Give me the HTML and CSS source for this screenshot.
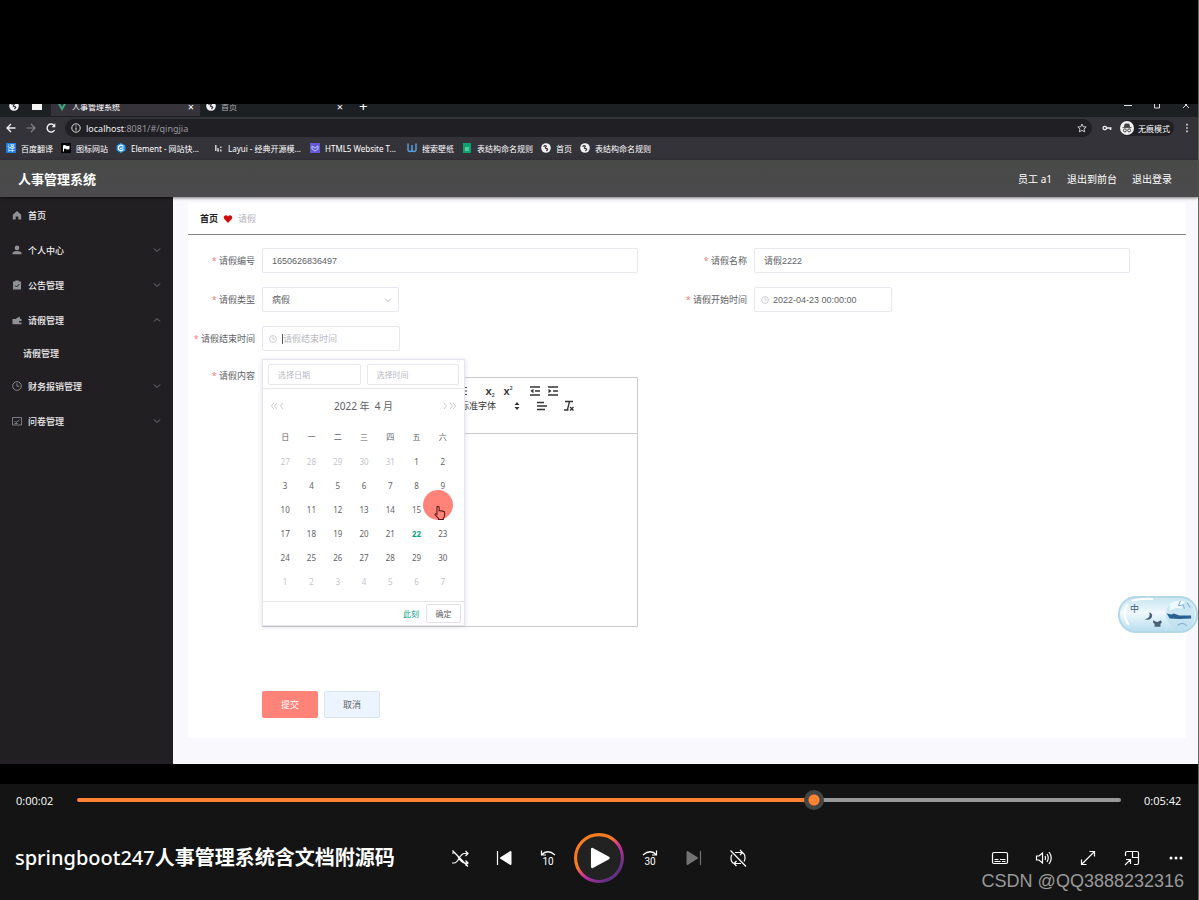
FILE: index.html
```html
<!DOCTYPE html>
<html lang="zh-CN">
<head>
<meta charset="utf-8">
<meta name="viewport" content="width=device-width, initial-scale=1">
<title>springboot247人事管理系统含文档附源码</title>
<link rel="stylesheet" href="styles.css">
</head>
<body>
<svg width="0" height="0" class="defs" aria-hidden="true">
  <defs>
    <symbol id="globe" viewBox="0 0 10 10"><circle cx="5" cy="5" r="4.800" fill="#f1f1f3"/><path d="M2.600 3.800c1-1.600 3-1.200 2.600-.2s-1 .8-.8 1.500 1.900.2 2.200 1-.7 1.500-1.400 1.500" fill="none" stroke="#2c2b30" stroke-width="1.200"/></symbol>
    <symbol id="down" viewBox="0 0 8 8"><path d="M1 2.500l3 3 3-3" fill="none" stroke="currentColor"/></symbol>
    <symbol id="clock" viewBox="0 0 10 10"><circle cx="5" cy="5" r="4.300" fill="none" stroke="currentColor" stroke-width=".9"/><path d="M5 2.400v2.800h2.200" fill="none" stroke="currentColor" stroke-width=".9"/></symbol>
  </defs>
</svg>
<main class="player">
  <section class="video">
    <div class="tabs">
      <div class="tabs-row">
        <svg class="ico10 pin1"><use href="#globe"/></svg>
        <svg class="ico12 pin2" viewBox="0 0 12 10"><path d="M1 1h4l1 1h5v7H1z" fill="#f4f4f4"/></svg>
        <div class="tab tab-on">
          <svg class="ico10" viewBox="0 0 10 10"><path d="M1 1l4 7 4-7" fill="none" stroke="#3aa981" stroke-width="2"/></svg>
          <span class="tab-name">人事管理系统</span><span class="x">×</span>
        </div>
        <div class="tab">
          <svg class="ico10"><use href="#globe"/></svg>
          <span class="tab-name dim">首页</span><span class="x">×</span>
        </div>
        <span class="plus">+</span>
        <div class="win">
          <svg class="ico10" viewBox="0 0 10 10"><path d="M1 4.500h8" stroke="#ddd"/></svg>
          <svg class="ico10" viewBox="0 0 10 10"><path d="M2.500 1v6h5V1" fill="none" stroke="#ddd"/></svg>
          <svg class="ico10" viewBox="0 0 10 10"><path d="M2 1l6 6M8 1L2 7" stroke="#ddd"/></svg>
        </div>
      </div>
    </div>
    <div class="address">
      <svg class="ico12" viewBox="0 0 12 12"><path d="M10.500 6H2M6 2L2 6l4 4" fill="none" stroke="#eee" stroke-width="1.400"/></svg>
      <svg class="ico12" viewBox="0 0 12 12"><path d="M1.500 6H10M6 2l4 4-4 4" fill="none" stroke="#88878b" stroke-width="1.200"/></svg>
      <svg class="ico12" viewBox="0 0 12 12"><path d="M9.600 8A4 4 0 1 1 9.200 3.500" fill="none" stroke="#eee" stroke-width="1.400"/><path d="M10.300 1.200v4H6.600z" fill="#eee"/></svg>
      <div class="url">
        <svg class="ico10" viewBox="0 0 10 10"><circle cx="5" cy="5" r="4.200" fill="none" stroke="#ddd"/><path d="M5 4.400V7.500M5 2.500v1" stroke="#ddd" stroke-width="1.100"/></svg>
        <span class="url-text"><b>localhost</b>:8081/#/qingjia</span>
        <svg class="ico10" viewBox="0 0 10 10"><path d="M5 1l1.200 2.700 3 .3-2.200 2 .7 2.900L5 7.400 2.300 8.900 3 6 .8 4l3-.3z" fill="none" stroke="#ddd" stroke-width=".9"/></svg>
      </div>
      <svg class="ico10 key" viewBox="0 0 10 10"><path d="M4.500 5H9.500M8.500 5v2" stroke="#eee" stroke-width="1.500"/><circle cx="2.800" cy="5" r="1.700" fill="none" stroke="#eee" stroke-width="1.300"/></svg>
      <div class="incog">
        <svg class="ico14" viewBox="0 0 14 14"><circle cx="7" cy="7" r="7" fill="#f1f1f1"/><path d="M2.500 6.600h9M4.300 6l.8-3h3.800l.8 3z" fill="#444" stroke="#444" stroke-width=".9"/><circle cx="4.900" cy="9.400" r="1.500" fill="none" stroke="#444"/><circle cx="9.100" cy="9.400" r="1.500" fill="none" stroke="#444"/></svg>
        <span>无痕模式</span>
      </div>
      <svg class="ico10" viewBox="0 0 10 10"><path d="M5 .8v1.600M5 4.200v1.600M5 7.600v1.600" stroke="#ddd" stroke-width="1.600"/></svg>
    </div>
    <nav class="bookmarks">
      <a href="#"><span class="yi">译</span>百度翻译</a>
      <a href="#"><svg class="ico10" viewBox="0 0 10 10"><path d="M0 0h10v10H0z" fill="#050505"/><path d="M2 2.500q1.500-1 3 0t3.500 0v3.500q-2 1-3.500 0T3 6v2.500H2z" fill="#fff"/></svg>图标网站</a>
      <a href="#" class="wide"><svg class="ico10" viewBox="0 0 10 10"><path d="M5 0l4.400 2.500v5L5 10 .6 7.500v-5z" fill="#2b98ec"/><path d="M7.500 3.200L5 2 2.500 3.400v3L5 7.800l2.500-1.300M7.500 4.700L4 5.500" fill="none" stroke="#fff" stroke-width="1.100"/></svg>Element - 网站快...</a>
      <a href="#" class="wide"><svg class="ico10" viewBox="0 0 10 10"><path d="M2.800 2v6M5 5v3.500M5 7.800h1M7.800 3.500v1.500M7.800 6.500v2" fill="none" stroke="#ddd" stroke-width="1.400"/></svg>Layui - 经典开源模...</a>
      <a href="#" class="wide"><svg class="ico10" viewBox="0 0 10 10"><path d="M0 0h10v10H0z" fill="#6558d8"/><path d="M2 3l3 2 3-2v3L5 8 2 6z" fill="none" stroke="#b5ccff"/></svg>HTML5 Website T...</a>
      <a href="#"><svg class="ico10" viewBox="0 0 10 10"><path d="M1 .5v6q0 2 2 2T5 6.500V2v4.500q0 2 2 2t2-2v-6" fill="none" stroke="#5a9bd8" stroke-width="1.500"/></svg>搜索壁纸</a>
      <a href="#"><svg class="ico10" viewBox="0 0 10 10"><path d="M1 0h8v10H1z" fill="#0ba36f"/><path d="M3 5h4M3 7h4" stroke="#a9e6cd"/></svg>表结构命名规则</a>
      <a href="#"><svg class="ico10"><use href="#globe"/></svg>首页</a>
      <a href="#"><svg class="ico10"><use href="#globe"/></svg>表结构命名规则</a>
    </nav>

    <header class="app-head">
      <h1>人事管理系统</h1>
      <span>员工 a1</span><a href="#">退出到前台</a><a href="#">退出登录</a>
    </header>

    <div class="app">
      <nav class="side">
        <a href="#"><svg class="ico10" viewBox="0 0 10 10"><path d="M.8 4.800L5 1l4.200 3.800V9.500H6.300V6.500H3.700v3H.8z" fill="#8f9195"/></svg><span>首页</span></a>
        <a href="#"><svg class="ico10" viewBox="0 0 10 10"><circle cx="5" cy="2.900" r="2.300" fill="#8f9195"/><path d="M.5 9.200V7.500Q1.500 6 5 6t4.500 1.500v1.700z" fill="#8f9195"/></svg><span>个人中心</span><svg class="ico8"><use href="#down"/></svg></a>
        <a href="#"><svg class="ico10" viewBox="0 0 10 10"><path d="M1 1.500h2.200V.5h3.600v1H9v8H1z" fill="#8f9195"/><path d="M3 5.500l1.500 1.500L7.300 4" fill="none" stroke="#221f23"/></svg><span>公告管理</span><svg class="ico8"><use href="#down"/></svg></a>
        <a href="#"><svg class="ico10" viewBox="0 0 10 10"><path d="M.5 4h3l4-2.500.8 2.500H9.500v2H7v1.500h2.500v1.700H.5z" fill="#8f9195"/></svg><span>请假管理</span><svg class="ico8 up"><use href="#down"/></svg></a>
        <a href="#" class="sub"><span>请假管理</span></a>
        <a href="#"><svg class="ico10 grey"><use href="#clock"/></svg><span>财务报销管理</span><svg class="ico8"><use href="#down"/></svg></a>
        <a href="#"><svg class="ico10" viewBox="0 0 10 10"><path d="M.5 1.500h9v7.500h-9zM2.500 5l1.500 1.500L7.500 3.800M2.500 7.500h3" fill="none" stroke="#8f9195" stroke-width=".8"/></svg><span>问卷管理</span><svg class="ico8"><use href="#down"/></svg></a>
      </nav>

      <div class="main">
        <div class="card">
          <div class="crumb"><b>首页</b><svg class="ico10" viewBox="0 0 10 10"><path d="M5 9L1.300 5C-.6 2.500 3-.2 5 2.400 7-.2 10.600 2.500 8.700 5z" fill="#d10a0a"/></svg><span>请假</span></div>
          <form class="form">
            <div class="field"><label for="no">请假编号</label><input id="no" class="box" value="1650626836497"></div>
            <div class="field"><label for="name">请假名称</label><input id="name" class="box" value="请假2222"></div>
            <div class="field"><label for="type">请假类型</label>
              <div class="box short"><select id="type"><option>病假</option></select><svg class="ico8"><use href="#down"/></svg></div></div>
            <div class="field"><label for="from">请假开始时间</label>
              <div class="box date"><svg class="ico8"><use href="#clock"/></svg><input id="from" value="2022-04-23 00:00:00"></div></div>
            <div class="field first"><label for="to">请假结束时间</label>
              <div class="box date"><svg class="ico8"><use href="#clock"/></svg><i class="caret"></i><input id="to" placeholder="请假结束时间">
                <div class="picker">
                  <div class="pick-in"><input aria-label="选择日期" placeholder="选择日期"><input aria-label="选择时间" placeholder="选择时间"></div>
                  <div class="pick-head">
                    <button type="button" aria-label="上个月"><svg class="ico14" viewBox="0 0 14 10"><path d="M4 2L1.500 5 4 8M7 2L4.500 5 7 8M13 2l-2.500 3L13 8" fill="none" stroke="currentColor" stroke-width=".8"/></svg></button>
                    <span>2022 年&nbsp; 4 月</span>
                    <button type="button" aria-label="下个月"><svg class="ico14" viewBox="0 0 14 10"><path d="M1 2l2.500 3L1 8M7 2l2.500 3L7 8M10 2l2.500 3L10 8" fill="none" stroke="currentColor" stroke-width=".8"/></svg></button>
                  </div>
                  <table class="cal">
                    <thead><tr><th>日</th><th>一</th><th>二</th><th>三</th><th>四</th><th>五</th><th>六</th></tr></thead>
                    <tbody>
                      <tr><td class="off">27</td><td class="off">28</td><td class="off">29</td><td class="off">30</td><td class="off">31</td><td>1</td><td>2</td></tr>
                      <tr><td>3</td><td>4</td><td>5</td><td>6</td><td>7</td><td>8</td><td>9</td></tr>
                      <tr><td>10</td><td>11</td><td>12</td><td>13</td><td>14</td><td>15</td><td class="hover"><span class="spot"><svg viewBox="0 0 16 18"><path d="M4.500 10.500V2.500q1.300-1.500 2.500 0V7q1-.8 2.200.3 1.200-.7 2.100.5 1.700-.4 2 1V12q0 2-1.500 3.500V17h-5.500v-1.300L2.200 11.500q.5-2 2.300-.5z" fill="#ff8379" stroke="#5a1717" stroke-width="1.200"/></svg></span></td></tr>
                      <tr><td>17</td><td>18</td><td>19</td><td>20</td><td>21</td><td class="today">22</td><td>23</td></tr>
                      <tr><td>24</td><td>25</td><td>26</td><td>27</td><td>28</td><td>29</td><td>30</td></tr>
                      <tr><td class="off">1</td><td class="off">2</td><td class="off">3</td><td class="off">4</td><td class="off">5</td><td class="off">6</td><td class="off">7</td></tr>
                    </tbody>
                  </table>
                  <div class="pick-foot"><button type="button" class="now">此刻</button><button type="button" class="ok">确定</button></div>
                </div>
              </div></div>
            <div class="field first top"><label for="body">请假内容</label>
              <div class="editor">
                <div class="bar">
                  <div class="bar-row">
                    <button type="button" aria-label="列表"><svg class="ico12" viewBox="0 0 12 12"><path d="M1 2.500h9M1 6h9M1 9.500h9" stroke="#444" stroke-width="1.200"/></svg></button>
                    <span class="pair"><button type="button">x<sub>2</sub></button><button type="button">x<sup>2</sup></button></span>
                    <span class="pair"><button type="button" aria-label="减少缩进"><svg class="ico12" viewBox="0 0 12 12"><path d="M1 2h10M6 6h5M1 10h10" stroke="#333" stroke-width="1.500"/><path d="M4.500 3.800v4.400L1.500 6z" fill="#333"/></svg></button><button type="button" aria-label="增加缩进"><svg class="ico12" viewBox="0 0 12 12"><path d="M1 2h10M6 6h5M1 10h10" stroke="#333" stroke-width="1.500"/><path d="M1.500 3.800v4.400l3-2.200z" fill="#333"/></svg></button></span>
                  </div>
                  <div class="bar-row bar-low">
                    <button type="button" class="font">标准字体<svg class="ico8" viewBox="0 0 8 8"><path d="M4 0l2.500 3h-5zM4 8L1.500 5h5z" fill="#333"/></svg></button>
                    <button type="button" aria-label="对齐"><svg class="ico12" viewBox="0 0 12 12"><path d="M1 2.500h7M1 6h10M1 9.500h8" stroke="#333" stroke-width="1.300"/></svg></button>
                    <button type="button" aria-label="清除格式"><svg class="ico12" viewBox="0 0 12 12"><path d="M2 1.500h8M6.500 1.500L4.500 9.500M1 10h4.500M7 7l3.500 3.500M10.500 7L7 10.500" fill="none" stroke="#333" stroke-width="1.300"/></svg></button>
                  </div>
                </div>
                <textarea id="body"></textarea>
              </div></div>
            <div class="actions"><button type="button" class="send">提交</button><button type="button" class="cancel">取消</button></div>
          </form>
        </div>
      </div>
    </div>
    <div class="ime">
      <span>中</span>
      <svg viewBox="0 0 80 38"><path d="M31 17q2 6-5 7 8 1.500 8-4.500-.5-2-3-2.500M35 25l2 1q2 1.500 4 0l2-1 1 2.500-1.500 1v3h-6v-3l-1.500-1z" fill="#4a6076"/><circle cx="63" cy="19" r="15" fill="#b9deef" fill-opacity=".6"/><path d="M52 8q8-6 16-2l-4 7q-6-2-12 2z" fill="#edf9ff"/><path d="M49 18l5 1 2-1 6 2h12v3q-12 1-22 0z" fill="#2a6194"/><path d="M63 5l-2 5 5-1 1 4M70 7l3 5M60 30q6-4 10 1" fill="none" stroke="#75aac4"/><path d="M9 8Q2 19 10 30M13 5q10-3 22-2" fill="none" stroke="#fff" stroke-width="2"/></svg>
    </div>
  </section>

  <section class="controls">
    <div class="seek"><span>0:00:02</span><input type="range" aria-label="播放进度" min="0" max="100" value="71"><span>0:05:42</span></div>
    <div class="deck">
      <h2><span>springboot247</span>人事管理系统含文档附源码</h2>
      <div class="group">
        <button type="button" aria-label="随机播放"><svg viewBox="0 0 20 20"><path d="M2 5h2q2 0 4.500 4.500T14 15h4M2 15h2q2.500 0 5-4.500T14 5.500h4M15.500 3l2.500 2.500L15.500 8M15.500 12.500L18 15l-2.500 2.500M2.500 2.500l15.500 16"/></svg></button>
        <button type="button" aria-label="上一个"><svg viewBox="0 0 20 20"><path d="M3.500 3v14"/><path d="M16.500 4v12L7 10z" fill="#fff" stroke-width="2" stroke-linejoin="round"/></svg></button>
        <button type="button" aria-label="后退10秒"><svg viewBox="0 0 20 20"><path d="M3.500 2.500V7H8M3.500 7q6-6.500 13.500 0"/><text x="10" y="17" text-anchor="middle">10</text></svg></button>
        <button type="button" class="play" aria-label="播放"><svg viewBox="0 0 48 48"><defs><linearGradient id="ring" x1=".2" y1=".15" x2=".8" y2=".85"><stop offset=".35" stop-color="#f57c22"/><stop offset=".5" stop-color="#e0457c"/><stop offset=".65" stop-color="#b52f98"/><stop offset="1" stop-color="#633184"/></linearGradient></defs><circle cx="24" cy="24" r="22.500" fill="#222" stroke="url(#ring)" stroke-width="3"/><path d="M17.500 15.500v17L33 24z" fill="#fff" stroke="#fff" stroke-width="2.500" stroke-linejoin="round"/></svg></button>
        <button type="button" aria-label="前进30秒"><svg viewBox="0 0 20 20"><path d="M16.500 2.500V7H12M16.500 7q-6-6.500-13.500 0"/><text x="10" y="17" text-anchor="middle">30</text></svg></button>
        <button type="button" aria-label="下一个" class="faded"><svg viewBox="0 0 20 20"><path d="M16.500 3v14"/><path d="M3.500 4v12L13 10z" fill="#fff" stroke-width="2" stroke-linejoin="round"/></svg></button>
        <button type="button" aria-label="循环"><svg viewBox="0 0 20 20"><path d="M7 4.500h7q3 1 3 5.500 0 2-1 3.500M12 2l2.500 2.500L12 7M13 15.500H6q-3-1-3-5.500 0-2 1-3.500M8.500 13L6 15.500 8.500 18M2.500 2.500l15.500 16"/></svg></button>
      </div>
      <div class="group right">
        <button type="button" aria-label="字幕"><svg viewBox="0 0 20 20"><rect x="2.500" y="4.500" width="15" height="11" rx="1.500"/><path d="M4.500 11.500h4M10 11.500h5.500M4.500 13.500h6M12 13.500h3.500"/></svg></button>
        <button type="button" aria-label="音量"><svg viewBox="0 0 20 20"><path d="M2.500 8v4h2.500l3.500 3V5L5 8zM11 8q1 2 0 4M13 6q2.500 4 0 8M15 4q4.500 6 0 12"/></svg></button>
        <button type="button" aria-label="全屏"><svg viewBox="0 0 20 20"><path d="M3.500 16.500l13-13M11.500 3.500h5v5M8.500 16.500h-5v-5"/></svg></button>
        <button type="button" aria-label="小窗"><svg viewBox="0 0 20 20"><path d="M3.500 8V5q0-1.500 1.500-1.500h10q1.500 0 1.500 1.500v10q0 1.500-1.500 1.500h-3M10.500 3.500v6h6M3 17l5.500-5.500M4 11.500h4.500V16"/></svg></button>
        <button type="button" aria-label="更多"><svg viewBox="0 0 20 20"><g fill="#fff" stroke="none"><circle cx="5" cy="10" r="1.500"/><circle cx="10" cy="10" r="1.500"/><circle cx="15" cy="10" r="1.500"/></g></svg></button>
      </div>
    </div>
    <div class="mark">CSDN @QQ3888232316</div>
  </section>
</main>
</body>
</html>
```
FILE: styles.css
```css
* { box-sizing: border-box; }
body { margin: 0; background: #000; color: #fff; font-family: "Noto Sans", "Noto Sans CJK SC", sans-serif; font-size: 9px; }
a { color: inherit; text-decoration: none; }
button, input, select, textarea { font: inherit; color: inherit; border: 0; background: none; padding: 0; margin: 0; outline: 0; }
button { display: inline-flex; align-items: center; justify-content: center; }
svg { flex: none; display: block; }
.defs { position: absolute; }
.ico8 { width: 8px; height: 8px; }
.ico10 { width: 10px; height: 10px; }
.ico12 { width: 12px; height: 12px; }
.ico14 { width: 14px; height: 14px; }

.player { min-height: 100vh; padding-top: 104px; border-right: 1px solid #666; display: flex; flex-direction: column; }
.video { position: relative; background: #35333a; }

.tabs { height: 13px; overflow: hidden; background: #1d2022; }
.tabs-row { height: 20px; margin-top: -8px; display: flex; align-items: center; font-size: 8px; }
.pin1 { margin: 0 12px 0 9px; }
.pin2 { margin-right: 8px; }
.tab { width: 149px; align-self: stretch; display: flex; align-items: center; gap: 5px; padding: 0 6px; }
.tab-on { background: #36343a; }
.tab-name { flex: 1; }
.dim { color: #aaa; }
.x { font-size: 11px; }
.plus { font-size: 15px; margin-left: 10px; }
.win { margin-left: auto; display: flex; gap: 19px; padding-right: 7px; }

.address { height: 22px; display: flex; align-items: center; gap: 8px; padding: 0 6px 0 5px; font-size: 9px; }
.url { flex: 1; height: 18px; border-radius: 9px; background: #201f24; display: flex; align-items: center; gap: 5px; padding: 0 5px 0 6px; }
.url-text { flex: 1; color: #98979c; }
.url-text b { font-weight: 400; color: #eee; }
.key { margin-left: 2px; }
.incog { height: 16px; display: flex; align-items: center; gap: 4px; padding-right: 4px; border-radius: 8px; background: #201f24; font-size: 8px; }

.bookmarks { height: 21px; display: flex; align-items: center; gap: 8px; padding: 0 6px 3px; font-size: 8px; white-space: nowrap; }
.bookmarks a { display: flex; align-items: center; gap: 5px; }
.bookmarks .wide { width: 89px; }
.yi { width: 10px; line-height: 10px; background: #1d7ae0; text-align: center; }

.app-head { position: relative; height: 37px; display: flex; align-items: center; gap: 15px; padding: 0 26px 0 18px; background: linear-gradient(#484a48, #4b494c); box-shadow: 0 1px 3px #0008; font-size: 10px; }
.app-head h1 { margin: 0 auto 0 0; font-size: 13px; }

.app { display: flex; background: #f9f8fd; color: #606266; }
.side { width: 173px; flex: none; background: #221f23; color: #eee; display: flex; flex-direction: column; }
.side a { height: 35px; display: flex; align-items: center; gap: 6px; padding: 1px 12px 0; }
.side span { flex: 1; font-weight: 500; }
.side .sub { height: 31px; padding-left: 23px; }
.side .ico8 { color: #77777c; }
.grey { color: #8f9195; }
.up { transform: scaleY(-1); }

.main { flex: 1; padding: 6px 12px 26px 15px; }
.card { background: #fff; padding-bottom: 20px; }
.crumb { height: 32px; display: flex; align-items: center; gap: 5px; padding-left: 12px; border-bottom: 1px solid #85828c; color: #b4b5bb; }
.crumb b { color: #222; }
.form { display: grid; grid-template-columns: 1fr 1fr; row-gap: 14px; padding: 13px 14px 0 0; }
.field { display: flex; align-items: center; gap: 7px; padding-right: 42px; }
.field label { width: 67px; flex: none; text-align: right; white-space: nowrap; }
.field label::before { content: "* "; color: #f08080; }
.first { grid-column: 1; }
.top { align-items: flex-start; }
.top label { line-height: 22px; }
.box { flex: 1; min-width: 0; height: 25px; border: 1px solid #e8e6ee; border-radius: 2px; padding: 0 9px; background: #fff; font-family: "Liberation Sans", "Noto Sans CJK SC", sans-serif; }
.short, .date { flex: none; display: flex; align-items: center; }
.short { width: 137px; padding-right: 6px; color: #606266; }
.short select { flex: 1; appearance: none; }
.short svg, .date svg { color: #b8bac2; }
.date { position: relative; width: 138px; padding: 0 6px; }
.date input { flex: 1; min-width: 0; margin-left: 4px; }
.date .caret + input { margin-left: 0; }
.caret { width: 1px; height: 10px; margin-left: 5px; background: #555; }
::placeholder { color: #b9bbc3; opacity: 1; }

.picker { position: absolute; z-index: 2; top: 32px; left: -1px; width: 203px; background: #fff; border: 1px solid #e6e4ec; box-shadow: 0 1px 5px #8883a044; font-family: "Noto Sans", "Noto Sans CJK SC", sans-serif; font-size: 8px; }
.pick-in { display: flex; gap: 6px; padding: 4px 5px 3px; border-bottom: 1px solid #e8e6ee; }
.pick-in input { flex: 1; min-width: 0; height: 21px; margin: 0; padding: 0 9px; border: 1px solid #e8e6ee; border-radius: 2px; }
.pick-head { height: 33px; display: flex; align-items: center; justify-content: space-between; padding: 0 7px; font-size: 10px; }
.pick-head button { color: #9a9ba2; }
.cal { width: 184px; margin: 1px 9px 8px; border-collapse: collapse; table-layout: fixed; text-align: center; }
.cal th { height: 26px; padding: 0; font-weight: 400; }
.cal td { height: 24px; padding: 0; }
.off { color: #c3c4cb; }
.today { color: #12a185; font-weight: 700; }
.hover { position: relative; }
.spot { position: absolute; left: -7px; top: -7px; width: 30px; height: 30px; border-radius: 50%; background: #ff8379; }
.spot svg { width: 14px; height: 17px; margin: 14px 0 0 10px; }
.pick-foot { display: flex; align-items: center; justify-content: flex-end; gap: 7px; padding: 2px 3px; border-top: 1px solid #e6e4ec; }
.now { color: #12a185; }
.ok { width: 35px; height: 19px; border: 1px solid #e3e1ea; border-radius: 2px; }

.editor { flex: 1; height: 250px; margin-top: 12px; border: 1px solid #cbccd0; display: flex; flex-direction: column; }
.bar { height: 56px; padding: 5px 0; border-bottom: 1px solid #cbccd0; color: #333; }
.bar-row { height: 15px; display: flex; align-items: center; gap: 15px; padding-left: 194px; }
.bar-low { padding-left: 197px; }
.bar button { min-width: 12px; height: 15px; white-space: nowrap; }
.bar sub, .bar sup { font-size: 5px; line-height: 6px; }
.bar sub { align-self: flex-end; }
.bar sup { align-self: flex-start; padding-top: 2px; }
.pair { display: flex; gap: 6px; font-size: 11px; font-weight: 600; }
.bar .font { gap: 17px; }
.editor textarea { flex: 1; resize: none; }
.actions { grid-column: 1; display: flex; gap: 6px; padding: 50px 0 0 74px; }
.actions button { width: 56px; height: 27px; border-radius: 2px; }
.send { background: #ff8379; color: #fff; }
.actions .cancel { background: #ecf5ff; border: 1px solid #dce4f2; }

.ime { position: absolute; right: 0; top: 492px; width: 80px; height: 37px; border: 2px solid #b4d9e6; border-radius: 18px; background: linear-gradient(#c9e6f1, #f0f8fd 45%, #b9dfee); color: #4a6076; }
.ime span { position: absolute; left: 10px; top: 4px; }
.ime svg { position: absolute; left: -2px; top: -2px; width: 80px; height: 37px; }

.controls { position: relative; flex: 1; margin-top: 20px; background: #141414; }
.seek { height: 32px; display: flex; align-items: center; gap: 23px; padding: 0 16px; font-family: "Open Sans", sans-serif; font-size: 11px; white-space: nowrap; }
.seek span { width: 38px; }
.seek input { flex: 1; appearance: none; height: 4px; border-radius: 2px; background: linear-gradient(90deg, #ff8330 71%, #999 71%); }
.seek input::-webkit-slider-thumb { appearance: none; width: 20px; height: 20px; border-radius: 50%; background: radial-gradient(#ff8330 5px, #444 6px); }
.deck { display: grid; grid-template-columns: 1fr auto 1fr; align-items: center; height: 84px; padding: 0 15px; }
.deck h2 { margin: 0; padding-bottom: 4px; font-size: 20px; font-weight: 700; white-space: nowrap; }
.deck h2 span { font-weight: 500; }
.group { display: flex; align-items: center; gap: 12px; }
.right { justify-content: flex-end; margin-right: -9px; }
.group button { width: 32px; height: 32px; }
.group svg { width: 20px; height: 20px; fill: none; stroke: #fff; stroke-width: 1.2; }
.group text { font: 400 10px Roboto, sans-serif; fill: #fff; stroke: none; }
.group .play, .play svg { width: 50px; height: 50px; }
.group .play { margin: 0 -2px; }
.faded { opacity: .4; }
.mark { position: absolute; right: 14px; bottom: 8px; font: 18px/22px "Liberation Sans", sans-serif; color: #999; }
```
